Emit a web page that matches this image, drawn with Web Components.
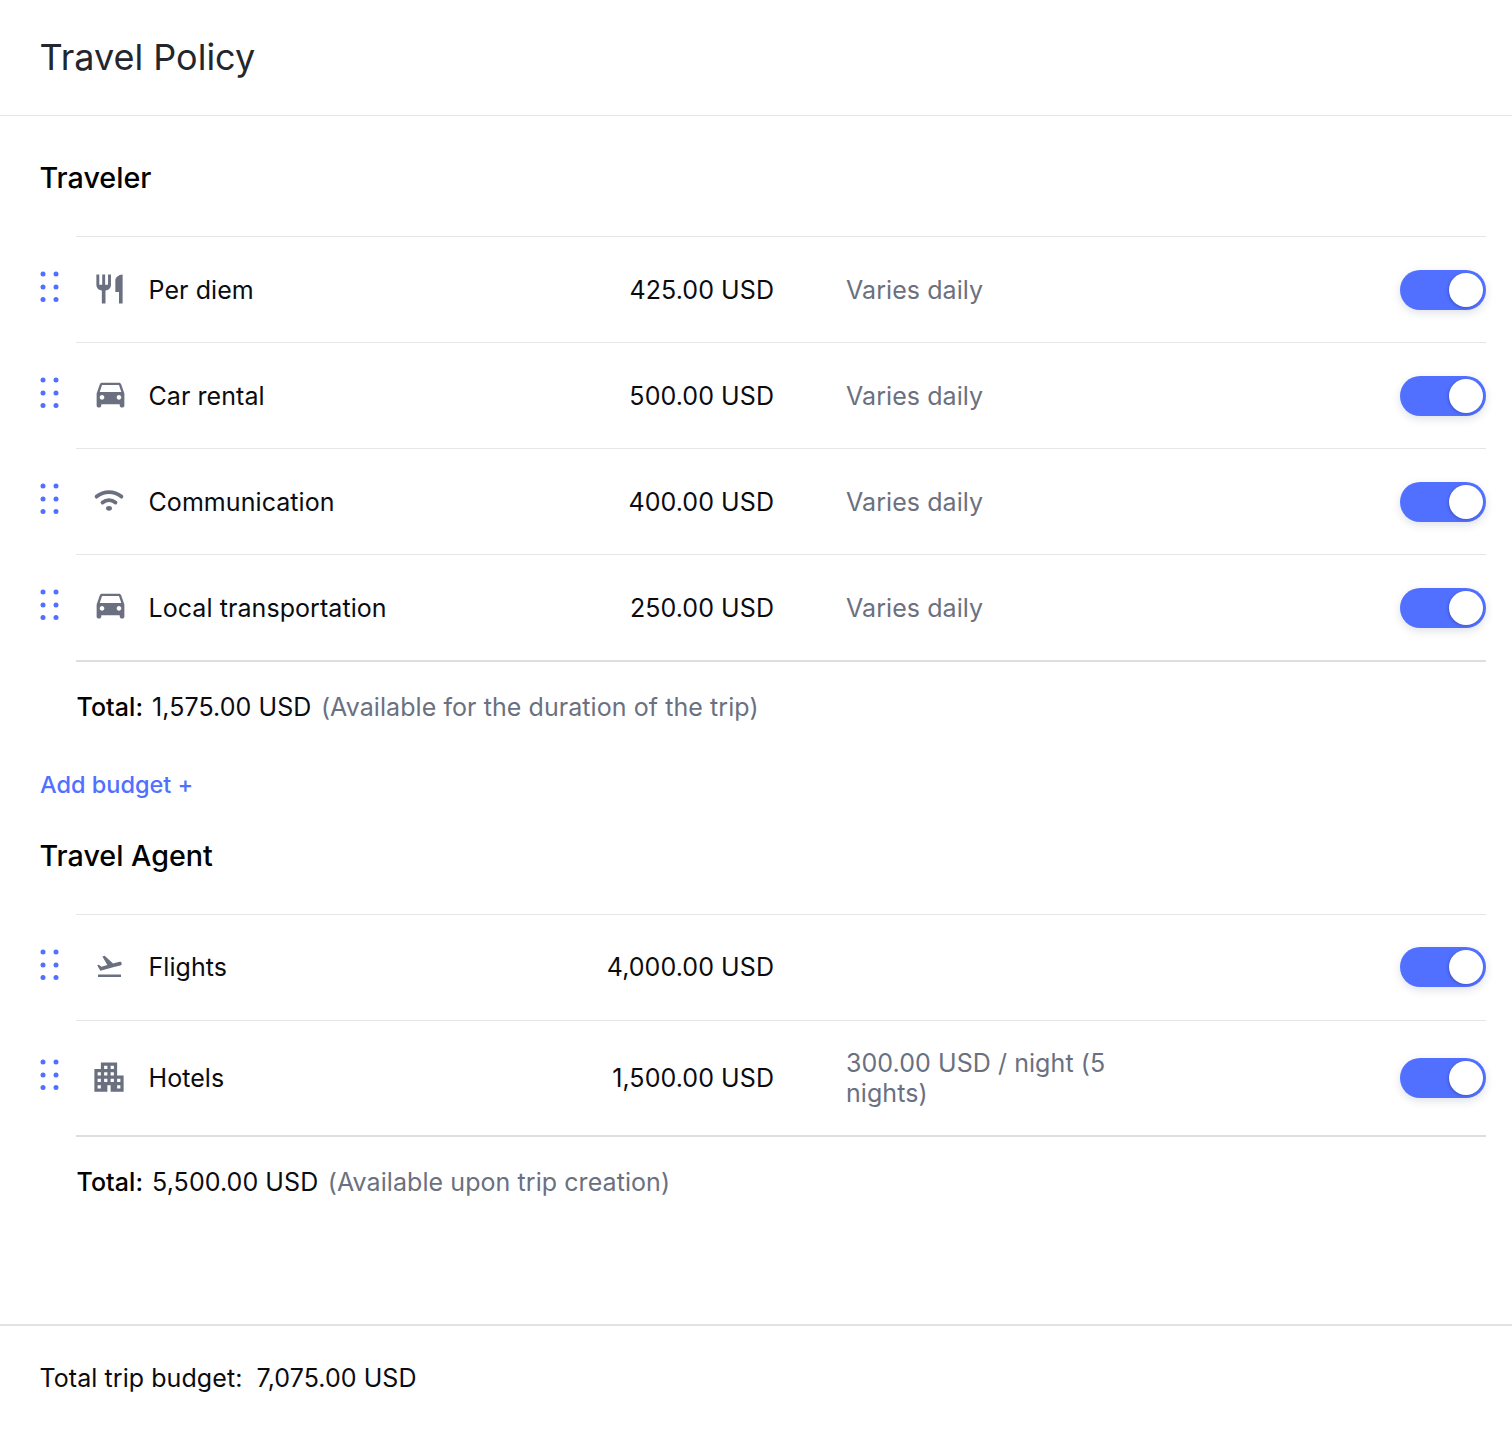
<!DOCTYPE html>
<html lang="en">
<head>
<meta charset="utf-8">
<title>Travel Policy</title>
<style>
  html, body { margin: 0; background: #fff; }
  body { font-family: Inter, "Liberation Sans", sans-serif; color: #1f2128; }
</style>
</head>
<body>
<policy-page>
  <span slot="title">Travel Policy</span>

  <policy-section heading="Traveler" first>
    <budget-row icon="restaurant" label="Per diem" amount="425.00 USD" note="Varies daily"></budget-row>
    <budget-row icon="car" label="Car rental" amount="500.00 USD" note="Varies daily"></budget-row>
    <budget-row icon="wifi" label="Communication" amount="400.00 USD" note="Varies daily"></budget-row>
    <budget-row icon="car" label="Local transportation" amount="250.00 USD" note="Varies daily"></budget-row>
    <span slot="total">1,575.00 USD</span>
    <span slot="hint">(Available for the duration of the trip)</span>
    <span slot="action">Add budget +</span>
  </policy-section>

  <policy-section heading="Travel Agent">
    <budget-row icon="flight" label="Flights" amount="4,000.00 USD" raised></budget-row>
    <budget-row icon="hotel" label="Hotels" amount="1,500.00 USD" note="300.00 USD / night (5 nights)"></budget-row>
    <span slot="total">5,500.00 USD</span>
    <span slot="hint">(Available upon trip creation)</span>
  </policy-section>

  <span slot="footer">Total trip budget:&nbsp; 7,075.00 USD</span>
</policy-page>

<script>
  // Material style icons, 24x24 viewBox. size and nudge come from the design's icon boxes
  const ICONS = {
    restaurant: { size: 35, dx: 0, dy: -1.5, body: `<path d="M11 9H9V2H7v7H5V2H3v7c0 2.12 1.66 3.84 3.75 3.97V22h2.5v-9.03C11.34 12.84 13 11.12 13 9V2h-2v7zm5-3v8h2.5v8H21V2c-2.76 0-5 2.24-5 4z"/>` },
    car: { size: 37, dx: 1, dy: -3, body: `<path d="M18.92 6.01C18.72 5.42 18.16 5 17.5 5h-11c-.66 0-1.21.42-1.42 1.01L3 12v8c0 .55.45 1 1 1h1c.55 0 1-.45 1-1v-1h12v1c0 .55.45 1 1 1h1c.55 0 1-.45 1-1v-8l-2.08-5.99zM6.5 16c-.83 0-1.5-.67-1.5-1.5S5.67 13 6.5 13s1.5.67 1.5 1.5S7.33 16 6.5 16zm11 0c-.83 0-1.5-.67-1.5-1.5s.67-1.5 1.5-1.5 1.5.67 1.5 1.5-.67 1.5-1.5 1.5zM5 11l1.5-4.5h11L19 11H5z"/>` },
    wifi: { size: 31, dx: -.5, dy: -1, body: `<g fill="none" stroke="#6b7080" stroke-width="3" stroke-linecap="round"><path d="M2.4 8.2c5.7-4.6 13.5-4.6 19.2 0"/><path d="M7 12.8c3-2.4 7-2.4 10 0"/></g><ellipse cx="12" cy="17.3" rx="2.3" ry="1.9"/>` },
    flight: { size: 29, dx: 0, dy: -.5, body: `<path d="M2.5 19h19v2h-19zm19.57-9.36c-.21-.8-1.04-1.28-1.84-1.06L14.92 10l-6.9-6.43-1.93.51 4.14 7.17-4.97 1.33-1.97-1.54-1.45.39 1.82 3.16.77 1.33 1.6-.43 5.31-1.42 4.35-1.16L21 11.49c.81-.23 1.28-1.05 1.07-1.85z"/>` },
    hotel: { size: 39, dx: -.5, dy: -1.5, body: `<path d="M17 11V3H7v4H3v14h8v-4h2v4h8V11h-4zM7 19H5v-2h2v2zm0-4H5v-2h2v2zm0-4H5V9h2v2zm4 4H9v-2h2v2zm0-4H9V9h2v2zm0-4H9V5h2v2zm4 8h-2v-2h2v2zm0-4h-2V9h2v2zm0-4h-2V5h2v2zm4 12h-2v-2h2v2zm0-4h-2v-2h2v2z"/>` }
  };

  class PolicyPage extends HTMLElement {
    constructor() {
      super();
      this.attachShadow({ mode: "open" });
      this.shadowRoot.innerHTML = `
        <style>
          :host { display: flex; flex-direction: column; width: 1512px; height: 1438px; box-sizing: border-box; }
          header { height: 113px; padding-bottom: 2px; border-bottom: 1px solid #e6e6e6; padding-left: 39.5px; display: flex; align-items: center; font-size: 36px; color: #24262d; }
          main { flex: 1; padding: 0 26px 0 40px; }
          footer { height: 104px; padding-bottom: 8px; border-top: 2px solid #e2e2e2; padding-left: 39.5px; display: flex; align-items: center; font-size: 25px; letter-spacing: .07px; color: #0b0c10; }
        </style>
        <header><slot name="title"></slot></header>
        <main><slot></slot></main>
        <footer><slot name="footer"></slot></footer>
      `;
    }
  }

  class PolicySection extends HTMLElement {
    constructor() {
      super();
      this.attachShadow({ mode: "open" });
      this.shadowRoot.innerHTML = `
        <style>
          :host { display: block; }
          h2 { margin: 0 0 0 -.5px; font-size: 28.7px; font-weight: 500; line-height: 36px; color: #000; padding-bottom: 40px; }
          :host([first]) h2 { padding-top: 44px; }
          :host(:not([first])) h2 { padding-top: 38px; }
          .rows { margin-left: 36px; border-top: 1px solid #e6e6e6; }
          .total { margin-left: 36.5px; display: flex; align-items: center; height: 90px; font-size: 25px; letter-spacing: .07px; color: #0b0c10; }
          .total b { font-weight: 500; margin-right: 9px; color: #000; }
          .hint { color: #6b7080; margin-left: 9.5px; }
          .action { color: #5270ff; font-size: 23.5px; font-weight: 500; line-height: 30px; padding-top: 18px; }
        </style>
        <h2></h2>
        <div class="rows"><slot></slot></div>
        <div class="total"><b>Total:</b><span><slot name="total"></slot></span><span class="hint"><slot name="hint"></slot></span></div>
        <div class="action"><slot name="action"></slot></div>
      `;
    }
    connectedCallback() {
      this.shadowRoot.querySelector("h2").textContent = this.getAttribute("heading");
    }
  }

  class BudgetRow extends HTMLElement {
    constructor() {
      super();
      this.attachShadow({ mode: "open" });
    }
    connectedCallback() {
      const note = this.getAttribute("note") || "";
      const icon = ICONS[this.getAttribute("icon")];
      this.shadowRoot.innerHTML = `
        <style>
          :host { display: grid; grid-template-columns: 20px 52.5px 200px 425.5px 345px 1fr; align-items: center; position: relative; min-height: 106px; padding: 27px 0 26px; box-sizing: border-box; border-bottom: 1px solid #e6e6e6; font-size: 25px; letter-spacing: .07px; line-height: 30px; color: #0b0c10; }
          :host(:last-of-type) { min-height: 107px; padding-bottom: 27px; border-bottom: 2px solid #dedede; }
          :host([raised]) { padding: 26px 0 28px; }
          .grip { position: absolute; left: -36px; top: calc(50% - 19px); width: 20px; height: 32px; }
          .icon-cell { grid-column: 2; width: 26px; height: 26px; display: flex; align-items: center; justify-content: center; }
          svg.icon { display: block; flex: none; fill: #6b7080; }
          .label { grid-column: 3; white-space: nowrap; }
          .amount { grid-column: 4; text-align: right; white-space: nowrap; }
          .note { grid-column: 5; color: #6b7080; padding-left: 72px; }
          .toggle-cell { grid-column: 6; justify-self: end; }
        </style>
        <svg class="grip" viewBox="0 0 20 32" fill="#5270ff" aria-hidden="true">
          <circle cx="3" cy="3" r="2.5"/><circle cx="16" cy="3" r="2.5"/>
          <circle cx="3" cy="16" r="2.5"/><circle cx="16" cy="16" r="2.5"/>
          <circle cx="3" cy="28.5" r="2.5"/><circle cx="16" cy="28.5" r="2.5"/>
        </svg>
        <div class="icon-cell"><svg class="icon" viewBox="0 0 24 24" width="${icon.size}" height="${icon.size}" style="transform: translate(${icon.dx}px, ${icon.dy}px)">${icon.body}</svg></div>
        <div class="label">${this.getAttribute("label")}</div>
        <div class="amount">${this.getAttribute("amount")}</div>
        <div class="note">${note}</div>
        <div class="toggle-cell"><toggle-switch></toggle-switch></div>
      `;
    }
  }

  class ToggleSwitch extends HTMLElement {
    constructor() {
      super();
      this.attachShadow({ mode: "open" });
      this.shadowRoot.innerHTML = `
        <style>
          :host { display: block; position: relative; width: 86px; height: 40px; border-radius: 20px; background: #5270ff; box-shadow: 0 3px 8px rgba(30,40,90,.14); }
          i { position: absolute; right: 3px; top: 3px; width: 34px; height: 34px; border-radius: 50%; background: #fff; box-shadow: -1px 1px 3px rgba(20,30,90,.3); }
        </style>
        <i></i>
      `;
    }
  }

  customElements.define("toggle-switch", ToggleSwitch);
  customElements.define("budget-row", BudgetRow);
  customElements.define("policy-section", PolicySection);
  customElements.define("policy-page", PolicyPage);
</script>
</body>
</html>
